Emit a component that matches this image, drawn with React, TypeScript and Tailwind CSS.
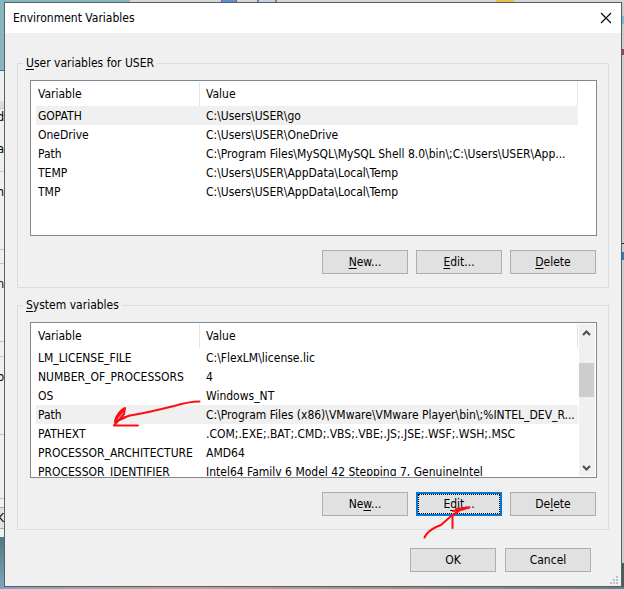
import { useState } from "react";
import type { ReactNode } from "react";

type Variable = {
  readonly name: string;
  readonly value: string;
};

const userVariables: readonly Variable[] = [
  { name: "GOPATH", value: "C:\\Users\\USER\\go" },
  { name: "OneDrive", value: "C:\\Users\\USER\\OneDrive" },
  {
    name: "Path",
    value: "C:\\Program Files\\MySQL\\MySQL Shell 8.0\\bin\\;C:\\Users\\USER\\App...",
  },
  { name: "TEMP", value: "C:\\Users\\USER\\AppData\\Local\\Temp" },
  { name: "TMP", value: "C:\\Users\\USER\\AppData\\Local\\Temp" },
];

const systemVariables: readonly Variable[] = [
  { name: "LM_LICENSE_FILE", value: "C:\\FlexLM\\license.lic" },
  { name: "NUMBER_OF_PROCESSORS", value: "4" },
  { name: "OS", value: "Windows_NT" },
  {
    name: "Path",
    value: "C:\\Program Files (x86)\\VMware\\VMware Player\\bin\\;%INTEL_DEV_R...",
  },
  { name: "PATHEXT", value: ".COM;.EXE;.BAT;.CMD;.VBS;.VBE;.JS;.JSE;.WSF;.WSH;.MSC" },
  { name: "PROCESSOR_ARCHITECTURE", value: "AMD64" },
  { name: "PROCESSOR_IDENTIFIER", value: "Intel64 Family 6 Model 42 Stepping 7, GenuineIntel" },
];

export default function App() {
  return (
    <div className="relative overflow-hidden py-[2px] pr-[2px] pl-1 font-['DejaVu_Sans_Condensed','Open_Sans',sans-serif] text-xs leading-4 text-black">
      <Desktop />

      <main className="relative border border-[#5a5f60] bg-[#f0f0f0]">
        <header className="flex h-[30px] items-center justify-between bg-white pr-[7px] pl-2">
          <h1>Environment Variables</h1>
          <button type="button" aria-label="Close" className="p-[2px]">
            <svg width="12" height="12" viewBox="0 0 12 12" fill="none" stroke="#000" aria-hidden="true">
              <path d="M1 1l10 10M11 1L1 11" strokeWidth="1.1" />
            </svg>
          </button>
        </header>

        <div className="flex flex-col gap-[9px] px-3 pt-[22px]">
          <VariableGroup
            title="User variables for USER"
            variables={userVariables}
            initial="GOPATH"
            keys={[0, 0, 0]}
          />
          <VariableGroup
            title="System variables"
            variables={systemVariables}
            initial="Path"
            keys={[2, 1, 2]}
            scrollable
            editFocused
          />
        </div>

        <footer className="flex justify-end gap-[9px] pt-[18px] pr-[30px] pb-[14px]">
          <PushButton>OK</PushButton>
          <PushButton>Cancel</PushButton>
        </footer>

        <SizeGrip />
      </main>

      <Arrows />
    </div>
  );
}

type VariableGroupProps = {
  readonly title: string;
  readonly variables: readonly Variable[];
  readonly initial: string;
  /** Access key positions for New, Edit and Delete. */
  readonly keys: readonly [number, number, number];
  readonly scrollable?: boolean;
  readonly editFocused?: boolean;
};

/**
 * Group box with a variable list and its New / Edit / Delete buttons.
 */
function VariableGroup({
  title,
  variables,
  initial,
  keys,
  scrollable = false,
  editFocused = false,
}: VariableGroupProps) {
  const [selected, setSelected] = useState(initial);

  return (
    <section aria-label={title}>
      <div className="flex items-end">
        <span className="h-2 w-[6px] border-t border-l border-[#dcdcdc]" />
        <h2 className="px-[3px]">
          <Mnemonic text={title} at={0} />
        </h2>
        <span className="h-2 flex-1 border-t border-r border-[#dcdcdc]" />
      </div>

      <div className="border-x border-b border-[#dcdcdc] pt-[9px] pr-[11px] pb-[13px] pl-3">
        <div className="flex h-[156px] border border-[#828790] bg-white p-px">
          <div className="min-w-0 flex-1 overflow-hidden">
            <table className="w-full table-fixed border-separate border-spacing-0 text-left">
              <thead>
                <tr className="h-6">
                  <th className="w-[168px] border-r border-[#e5e5e5] py-0 pl-[6px] font-normal">
                    Variable
                  </th>
                  <th className="border-r border-[#e5e5e5] py-0 pl-[6px] font-normal">Value</th>
                  <th className={scrollable ? "w-px" : "w-[17px]"} />
                </tr>
              </thead>
              <tbody>
                {variables.map((variable) => (
                  <VariableRow
                    key={variable.name}
                    variable={variable}
                    isSelected={variable.name === selected}
                    onSelect={() => setSelected(variable.name)}
                  />
                ))}
              </tbody>
            </table>
          </div>
          {scrollable ? <ScrollBar /> : null}
        </div>

        <div className="mt-[14px] flex justify-end gap-2 pr-px">
          <PushButton>
            <Mnemonic text="New..." at={keys[0]} />
          </PushButton>
          <PushButton focused={editFocused}>
            <Mnemonic text="Edit..." at={keys[1]} />
          </PushButton>
          <PushButton>
            <Mnemonic text="Delete" at={keys[2]} />
          </PushButton>
        </div>
      </div>
    </section>
  );
}

type VariableRowProps = {
  readonly variable: Variable;
  readonly isSelected: boolean;
  readonly onSelect: () => void;
};

function VariableRow({ variable, isSelected, onSelect }: VariableRowProps) {
  const fill = isSelected ? "bg-[#f0f0f0]" : "";

  return (
    <tr className="whitespace-nowrap" onClick={onSelect} aria-selected={isSelected}>
      <td className="p-0 pl-1">
        <div className={`h-[19px] pt-[2px] pl-[2px] ${fill}`}>{variable.name}</div>
      </td>
      <td className="p-0">
        <div className={`h-[19px] pt-[2px] pl-[6px] ${fill}`}>{variable.value}</div>
      </td>
      <td />
    </tr>
  );
}

function ScrollBar() {
  return (
    <div className="flex w-4 flex-col bg-[#f0f0f0]" aria-hidden="true">
      <svg className="h-[17px] w-4" viewBox="0 0 16 17" fill="none" stroke="#505050">
        <path d="M4 11l3.5-3.5L11 11" strokeWidth="2.2" />
      </svg>
      <span className="mt-[22px] mr-px h-[34px] bg-[#cdcdcd]" />
      <svg className="mt-auto h-[17px] w-4" viewBox="0 0 16 17" fill="none" stroke="#505050">
        <path d="M4 7l3.5 3.5L11 7" strokeWidth="2.2" />
      </svg>
    </div>
  );
}

type PushButtonProps = {
  readonly children: ReactNode;
  readonly focused?: boolean;
};

function PushButton({ children, focused = false }: PushButtonProps) {
  return (
    <button
      type="button"
      className={[
        "relative h-6 w-[86px] bg-[#e1e1e1]",
        focused ? "border-2 border-[#0078d7]" : "border border-[#adadad]",
      ].join(" ")}
    >
      {focused ? (
        <span aria-hidden="true" className="absolute inset-0 border border-dotted border-black" />
      ) : null}
      {children}
    </button>
  );
}

/** Label with its access key underlined. */
function Mnemonic({ text, at }: { readonly text: string; readonly at: number }) {
  return (
    <>
      {text.slice(0, at)}
      <span className="underline underline-offset-2">{text[at]}</span>
      {text.slice(at + 1)}
    </>
  );
}

function SizeGrip() {
  return (
    <svg
      className="absolute right-[3px] bottom-[2px] h-2 w-2"
      viewBox="0 0 8 8"
      fill="#bfbfbf"
      aria-hidden="true"
    >
      <path d="M6 0h2v2H6zM3 3h2v2H3zM6 3h2v2H6zM0 6h2v2H0zM3 6h2v2H3zM6 6h2v2H6z" />
    </svg>
  );
}

/** Hand-drawn pointers to the Path row and the Edit button. */
function Arrows() {
  return (
    <>
      <svg
        className="pointer-events-none absolute top-[396px] left-[110px] h-9 w-24"
        viewBox="110 396 96 36"
        fill="none"
        stroke="#fa0f14"
        strokeWidth="2"
        strokeLinecap="round"
        strokeLinejoin="round"
        aria-hidden="true"
      >
        <path d="M199.500 401.500C192 401.500 184 403 174 406 160 409.500 143 413.500 130 415.500L115 420.500C117 415 121 410 125 408L124 414 114 425.500H138" />
        <path d="M116 419l8-9M115 422l11-5" />
      </svg>
      <svg
        className="pointer-events-none absolute top-[504px] right-[150px] h-10 w-14"
        viewBox="418 504 56 40"
        fill="none"
        stroke="#fa0f14"
        strokeWidth="2"
        strokeLinecap="round"
        strokeLinejoin="round"
        aria-hidden="true"
      >
        <path d="M424.500 537.500C427 532 432 529 436 527L441 525 450 517 459 510.500 469 507.500" />
        <path d="M453 511l7-1M469 507.500L456 509M452.500 528V516l6-5" />
      </svg>
    </>
  );
}

/** Slivers of the windows and the wallpaper behind the dialog. */
function Desktop() {
  return (
    <div aria-hidden="true" className="absolute inset-0 flex flex-col">
      <div className="flex h-[2px] bg-[#d6d6d6]">
        <span className="w-[130px] bg-[#86b7c1]" />
        <span className="ml-[91px] w-4 border-x border-[#5f6f8f] bg-[#5e8ddb]" />
        <span className="ml-5 w-5 border-x-2 border-[#7184a8] bg-[#c5d0e3]" />
        <span className="ml-auto mr-[110px] w-[18px] bg-[#e2bd58]" />
      </div>
      <div className="flex flex-1 justify-between">
        <div className="flex w-1 flex-col bg-[#eef0f1]">
          <span className="h-[69px] border-b border-[#4c6a72] bg-[#86b7c1]" />
          <span className="h-[30px]" />
          <span className="h-2 border-b border-[#c4c4c4] bg-[#dcdcdc]" />
          <span className="flex h-[63px] flex-col items-end gap-4 border-b border-[#c4c4c4]">
            <span>d</span>
            <span>a</span>
          </span>
          <span className="flex h-[78px] justify-end border-b border-[#c4c4c4] pt-3">m</span>
          <span className="h-[14px] border-b border-[#c4c4c4]" />
          <span className="flex h-[78px] justify-end border-b border-[#c4c4c4] pt-3">n</span>
          <span className="h-[15px] border-b border-[#c4c4c4]" />
          <span className="flex h-[78px] justify-end border-b border-[#c4c4c4] pt-3">b</span>
          <span className="h-16 border-b border-[#c4c4c4]" />
          <span className="mt-2 flex h-[22px] items-center justify-end border-y border-[#adadad] bg-[#e1e1e1]">
            K
          </span>
          <span className="mt-2 flex-1 bg-linear-to-b from-[#4c7a80] to-[#7ea3c0]" />
        </div>
        <div className="flex w-[2px] flex-col bg-[#cbcccd]">
          <span className="mt-[14px] h-2 bg-[#6fc3d0]" />
          <span className="mt-[25px] h-[6px] bg-[#8a4a6c]" />
          <span className="mt-[188px] h-px bg-[#20204a]" />
          <span className="mt-2 h-2 bg-[#2d7fae]" />
          <span className="mt-auto h-6 bg-[#4b5c60]" />
        </div>
      </div>
      <div className="h-[2px] bg-linear-to-r from-[#7ea3c0] via-[#c3a493] via-30% to-[#4f868c]" />
    </div>
  );
}
